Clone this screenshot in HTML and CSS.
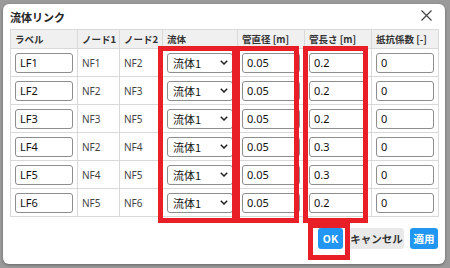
FILE: index.html
```html
<!DOCTYPE html>
<html lang="ja">
<head>
<meta charset="utf-8">
<title>流体リンク</title>
<link rel="stylesheet" href="styles.css">
</head>
<body>
<div class="dialog">
  <div class="dialog-header">
    <div class="title">流体リンク</div>
    <svg class="close" width="11" height="11" viewBox="0 0 11 11"><path d="M0.5 0.5 L10.5 10.5 M10.5 0.5 L0.5 10.5" stroke="#444" stroke-width="1.2" fill="none"/></svg>
  </div>
  <table class="grid">
    <colgroup>
      <col class="c-label"><col class="c-node"><col class="c-node2"><col class="c-fluid"><col class="c-num"><col class="c-num"><col class="c-num">
    </colgroup>
    <thead>
      <tr><th>ラベル</th><th>ノード1</th><th>ノード2</th><th>流体</th><th>管直径 [m]</th><th>管長さ [m]</th><th>抵抗係数 [-]</th></tr>
    </thead>
    <tbody>
      <tr><td><div class="field">LF1</div></td><td>NF1</td><td>NF2</td><td><div class="sel">流体1<svg class="chev" width="8" height="5" viewBox="0 0 8 5"><path d="M0.8 0.8 L4 4 L7.2 0.8" stroke="#222" stroke-width="1.5" fill="none"/></svg></div></td><td><div class="field">0.05</div></td><td><div class="field">0.2</div></td><td><div class="field">0</div></td></tr>
      <tr><td><div class="field">LF2</div></td><td>NF2</td><td>NF3</td><td><div class="sel">流体1<svg class="chev" width="8" height="5" viewBox="0 0 8 5"><path d="M0.8 0.8 L4 4 L7.2 0.8" stroke="#222" stroke-width="1.5" fill="none"/></svg></div></td><td><div class="field">0.05</div></td><td><div class="field">0.2</div></td><td><div class="field">0</div></td></tr>
      <tr><td><div class="field">LF3</div></td><td>NF3</td><td>NF5</td><td><div class="sel">流体1<svg class="chev" width="8" height="5" viewBox="0 0 8 5"><path d="M0.8 0.8 L4 4 L7.2 0.8" stroke="#222" stroke-width="1.5" fill="none"/></svg></div></td><td><div class="field">0.05</div></td><td><div class="field">0.2</div></td><td><div class="field">0</div></td></tr>
      <tr><td><div class="field">LF4</div></td><td>NF2</td><td>NF4</td><td><div class="sel">流体1<svg class="chev" width="8" height="5" viewBox="0 0 8 5"><path d="M0.8 0.8 L4 4 L7.2 0.8" stroke="#222" stroke-width="1.5" fill="none"/></svg></div></td><td><div class="field">0.05</div></td><td><div class="field">0.3</div></td><td><div class="field">0</div></td></tr>
      <tr><td><div class="field">LF5</div></td><td>NF4</td><td>NF5</td><td><div class="sel">流体1<svg class="chev" width="8" height="5" viewBox="0 0 8 5"><path d="M0.8 0.8 L4 4 L7.2 0.8" stroke="#222" stroke-width="1.5" fill="none"/></svg></div></td><td><div class="field">0.05</div></td><td><div class="field">0.3</div></td><td><div class="field">0</div></td></tr>
      <tr><td><div class="field">LF6</div></td><td>NF5</td><td>NF6</td><td><div class="sel">流体1<svg class="chev" width="8" height="5" viewBox="0 0 8 5"><path d="M0.8 0.8 L4 4 L7.2 0.8" stroke="#222" stroke-width="1.5" fill="none"/></svg></div></td><td><div class="field">0.05</div></td><td><div class="field">0.2</div></td><td><div class="field">0</div></td></tr>
    </tbody>
  </table>
  <div class="footer">
    <button class="btn btn-primary btn-ok">OK</button>
    <button class="btn btn-secondary btn-cancel">キャンセル</button>
    <button class="btn btn-primary btn-apply">適用</button>
  </div>
</div>
<div class="mark mark-fluid"></div>
<div class="mark mark-dia"></div>
<div class="mark mark-len"></div>
<div class="mark mark-ok"></div>
</body>
</html>
```
FILE: styles.css
```css
html, body {
  margin: 0;
  padding: 0;
}
body {
  width: 450px;
  height: 268px;
  background: #9a9a9a;
  font-family: "Noto Sans", "Noto Sans CJK JP", sans-serif;
  color: #222;
  overflow: hidden;
  position: relative;
}
.dialog {
  margin: 4px 0 0 3px;
  width: 442px;
  height: 260px;
  box-sizing: border-box;
  background: #fff;
  border-radius: 6px;
  padding: 0 7px;
  box-shadow: 0 1px 3px rgba(0,0,0,0.35);
}
.dialog-header {
  height: 25px;
  display: flex;
  align-items: center;
  justify-content: space-between;
}
.title {
  font-family: "Noto Sans CJK JP", sans-serif;
  font-size: 11px;
  font-weight: bold;
  line-height: 14px;
  color: #222;
  padding-top: 1px;
}
.close {
  margin-right: 6px;
  margin-top: -2px;
}
.grid {
  width: 428px;
  table-layout: fixed;
  border-collapse: collapse;
  border: 1px solid #d9d9d9;
}
.c-label { width: 67px; }
.c-node { width: 42px; }
.c-node2 { width: 43px; }
.c-fluid { width: 75px; }
.c-num { width: 67px; }
.grid th {
  height: 18px;
  padding: 0 4px;
  background: #f0f0f0;
  border: 1px solid #d9d9d9;
  text-align: left;
  font-family: "Noto Sans CJK JP", sans-serif;
  font-size: 9.5px;
  font-weight: bold;
  line-height: 12px;
  color: #333;
  white-space: nowrap;
}
.grid td {
  height: 27px;
  padding: 0 4px;
  border: 1px solid #d9d9d9;
  font-size: 10px;
  line-height: 12px;
  color: #444;
  vertical-align: middle;
}
.field, .sel {
  height: 20px;
  box-sizing: border-box;
  border: 1px solid #8e8e8e;
  border-radius: 3px;
  background: #fff;
  font-size: 11px;
  line-height: 18px;
  color: #111;
  padding: 0 4px;
}
.sel {
  display: flex;
  align-items: center;
  justify-content: space-between;
  font-family: "Noto Sans CJK JP", sans-serif;
  padding: 0 4px 0 5px;
}
.chev { flex: none; }
.footer {
  display: flex;
  justify-content: flex-end;
  gap: 6px;
  margin-top: 11px;
}
.btn {
  height: 21px;
  border: none;
  border-radius: 3px;
  padding: 0;
  font-family: "Noto Sans CJK JP", sans-serif;
  font-size: 10.5px;
  font-weight: bold;
  line-height: 21px;
  text-align: center;
}
.btn-ok { width: 25px; }
.btn-cancel { width: 55px; }
.btn-apply { width: 28px; }
.btn-primary {
  background: #2196f3;
  color: #fff;
}
.btn-secondary {
  background: #e9e9e9;
  color: #333;
}
.mark {
  position: absolute;
  border: 5px solid #e81f27;
  box-sizing: border-box;
}
.mark-fluid { left: 158px; top: 46px; width: 79px; height: 177px; }
.mark-dia { left: 235px; top: 46px; width: 64px; height: 177px; }
.mark-len { left: 303px; top: 46px; width: 65px; height: 177px; }
.mark-ok { left: 308px; top: 223px; width: 42px; height: 37px; }
```
